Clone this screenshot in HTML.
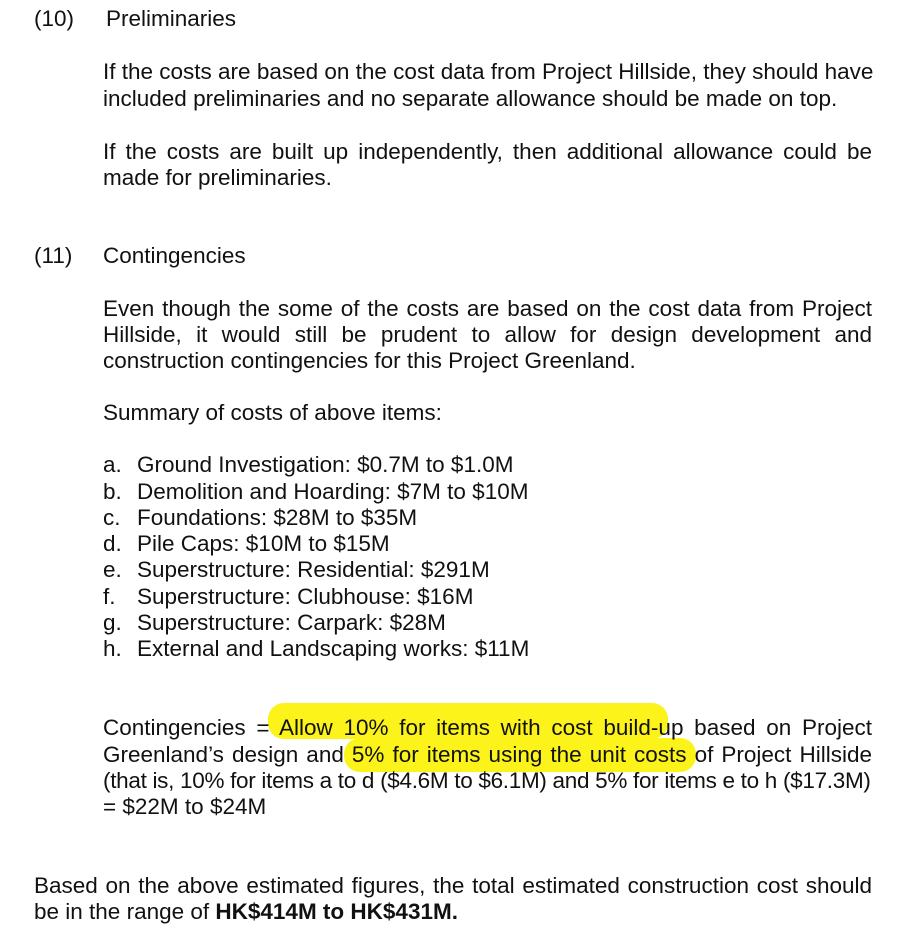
<!DOCTYPE html>
<html><head><style>
body{margin:0;width:918px;height:945px;background:#fff;position:relative;overflow:hidden;font-family:"Liberation Sans",Arial,sans-serif;font-size:22.5px;color:#111;}
.w{position:absolute;left:0;top:1px;width:918px;height:945px;}
.l{position:absolute;white-space:nowrap;line-height:24px;}
.j{position:absolute;left:103px;width:769px;line-height:24px;text-align:justify;text-align-last:justify;white-space:nowrap;}
.hl{position:absolute;background:#fbf31a;border-radius:14px;}
</style></head><body><div class="w">
<div class="hl" style="left:268px;top:702px;width:400px;height:36px;border-radius:16px"></div>
<div class="hl" style="left:344px;top:737px;width:352px;height:34px;border-radius:16px"></div>

<div class="l" style="left:34px;top:6px">(10)</div>
<div class="l" style="left:106px;top:6px">Preliminaries</div>
<div class="l" style="left:103px;top:59px">If the costs are based on the cost data from Project Hillside, they should have</div>
<div class="l" style="left:103px;top:86px">included preliminaries and no separate allowance should be made on top.</div>
<div class="j" style="top:139px">If the costs are built up independently, then additional allowance could be</div>
<div class="l" style="left:103px;top:165px">made for preliminaries.</div>

<div class="l" style="left:34px;top:243px">(11)</div>
<div class="l" style="left:103px;top:243px">Contingencies</div>
<div class="j" style="top:296px">Even though the some of the costs are based on the cost data from Project</div>
<div class="j" style="top:322px">Hillside, it would still be prudent to allow for design development and</div>
<div class="l" style="left:103px;top:348px">construction contingencies for this Project Greenland.</div>
<div class="l" style="left:103px;top:400px">Summary of costs of above items:</div>

<div class="l" style="left:103px;top:452px">a.</div><div class="l" style="left:137px;top:452px">Ground Investigation: $0.7M to $1.0M</div>
<div class="l" style="left:103px;top:479px">b.</div><div class="l" style="left:137px;top:479px">Demolition and Hoarding: $7M to $10M</div>
<div class="l" style="left:103px;top:505px">c.</div><div class="l" style="left:137px;top:505px">Foundations: $28M to $35M</div>
<div class="l" style="left:103px;top:531px">d.</div><div class="l" style="left:137px;top:531px">Pile Caps: $10M to $15M</div>
<div class="l" style="left:103px;top:557px">e.</div><div class="l" style="left:137px;top:557px">Superstructure: Residential: $291M</div>
<div class="l" style="left:103px;top:584px">f.</div><div class="l" style="left:137px;top:584px">Superstructure: Clubhouse: $16M</div>
<div class="l" style="left:103px;top:610px">g.</div><div class="l" style="left:137px;top:610px">Superstructure: Carpark: $28M</div>
<div class="l" style="left:103px;top:636px">h.</div><div class="l" style="left:137px;top:636px">External and Landscaping works: $11M</div>

<div class="j" style="top:715px">Contingencies = Allow 10% for items with cost build-up based on Project</div>
<div class="j" style="top:742px">Greenland’s design and 5% for items using the unit costs of Project Hillside</div>
<div class="l" style="left:103px;top:768px;letter-spacing:-0.3px">(that is, 10% for items a to d ($4.6M to $6.1M) and 5% for items e to h ($17.3M)</div>
<div class="l" style="left:103px;top:794px">= $22M to $24M</div>

<div class="j" style="left:34px;width:838px;top:873px">Based on the above estimated figures, the total estimated construction cost should</div>
<div class="l" style="left:34px;top:899px">be in the range of <b>HK$414M to HK$431M.</b></div>
</div></body></html>
